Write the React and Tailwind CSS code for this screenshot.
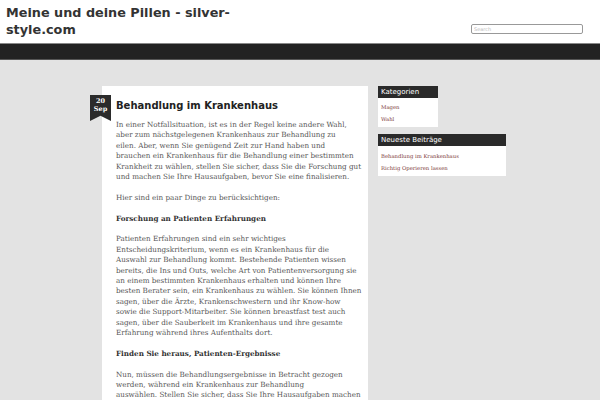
const intro = [
  'In einer Notfallsituation, ist es in der Regel keine andere Wahl,',
  'aber zum nächstgelegenen Krankenhaus zur Behandlung zu',
  'eilen. Aber, wenn Sie genügend Zeit zur Hand haben und',
  'brauchen ein Krankenhaus für die Behandlung einer bestimmten',
  'Krankheit zu wählen, stellen Sie sicher, dass Sie die Forschung gut',
  'und machen Sie Ihre Hausaufgaben, bevor Sie eine finalisieren.',
]

const erfahrungen = [
  'Patienten Erfahrungen sind ein sehr wichtiges',
  'Entscheidungskriterium, wenn es ein Krankenhaus für die',
  'Auswahl zur Behandlung kommt. Bestehende Patienten wissen',
  'bereits, die Ins und Outs, welche Art von Patientenversorgung sie',
  'an einem bestimmten Krankenhaus erhalten und können Ihre',
  'besten Berater sein, ein Krankenhaus zu wählen. Sie können Ihnen',
  'sagen, über die Ärzte, Krankenschwestern und ihr Know-how',
  'sowie die Support-Mitarbeiter. Sie können breastfast test auch',
  'sagen, über die Sauberkeit im Krankenhaus und ihre gesamte',
  'Erfahrung während ihres Aufenthalts dort.',
]

const ergebnisse = [
  'Nun, müssen die Behandlungsergebnisse in Betracht gezogen',
  'werden, während ein Krankenhaus zur Behandlung',
  'auswählen. Stellen Sie sicher, dass Sie Ihre Hausaufgaben machen',
]

function Lines({ lines, className = '' }) {
  return (
    <p className={className}>
      {lines.map((l, i) => (
        <span key={i} className="block">{l}</span>
      ))}
    </p>
  )
}

export default function App() {
  return (
    <div className="w-[600px] h-[400px] overflow-hidden bg-[#e3e3e3]">
      <header className="h-[43px] bg-white flex justify-between">
        <h1 className="w-[240px] pl-[6px] pt-[4px] font-['DejaVu_Sans',sans-serif] font-bold text-[12.8px] leading-[17px] text-[#333]">
          Meine und deine Pillen - silver-style.com
        </h1>
        <div className="pt-[13px] pr-[17px]">
          <input
            type="text"
            placeholder="Search"
            className="w-[112px] h-[10px] rounded-[2px] border border-[#999] bg-white px-[2px] text-[5px] font-['DejaVu_Sans',sans-serif] placeholder:text-[#bbb] outline-none"
          />
        </div>
      </header>
      <div className="h-[17px] border-t border-[#888] border-b border-b-[#555] bg-[#222]" />

      <div className="flex gap-[10px] pl-[102px] pt-[26px]">
        <article className="relative w-[266px] h-[330px] bg-white pl-[14px] pr-[4px] pt-[14px]">
          <div className="absolute left-[-12px] top-[9px] w-[21px] h-[26px] bg-[#2b2b2b] [clip-path:polygon(0_0,100%_0,100%_100%,50%_80%,0_100%)] flex flex-col items-center pt-[2px] font-['DejaVu_Serif',serif] font-bold text-white text-[6.5px] leading-[8px]">
            <span>20</span>
            <span>Sep</span>
          </div>
          <h2 className="font-['DejaVu_Sans',sans-serif] font-bold text-[10px] leading-[12px] text-[#222] mb-[8px]">
            Behandlung im Krankenhaus
          </h2>
          <div className="whitespace-nowrap font-['DejaVu_Serif',serif] text-[7.2px] leading-[10.4px] text-[#555]">
            <Lines lines={intro} className="mb-[10.4px]" />
            <p className="mb-[10.4px]">Hier sind ein paar Dinge zu berücksichtigen:</p>
            <p className="mb-[10.4px] font-bold text-[#333]">Forschung an Patienten Erfahrungen</p>
            <Lines lines={erfahrungen} className="mb-[10.4px]" />
            <p className="mb-[10.4px] font-bold text-[#333]">Finden Sie heraus, Patienten-Ergebnisse</p>
            <Lines lines={ergebnisse} />
          </div>
        </article>

        <aside className="flex flex-col items-start gap-[7px]">
          <div className="w-[60px] bg-white">
            <div className="h-[12px] bg-[#2a2a2a] pl-[3px] font-['DejaVu_Sans',sans-serif] text-white text-[7px] leading-[12px]">
              Kategorien
            </div>
            <ul className="px-[3px] pt-[3px] pb-[2px] font-['DejaVu_Serif',serif] text-[5.3px] leading-[12px] text-[#7d3b3b]">
              <li>Magen</li>
              <li>Wahl</li>
            </ul>
          </div>
          <div className="w-[128px] bg-white">
            <div className="h-[12px] bg-[#2a2a2a] pl-[3px] font-['DejaVu_Sans',sans-serif] text-white text-[7px] leading-[12px]">
              Neueste Beiträge
            </div>
            <ul className="px-[3px] pt-[4px] pb-[2px] font-['DejaVu_Serif',serif] text-[5.3px] leading-[12px] text-[#7d3b3b]">
              <li>Behandlung im Krankenhaus</li>
              <li>Richtig Operieren lassen</li>
            </ul>
          </div>
        </aside>
      </div>
    </div>
  )
}
